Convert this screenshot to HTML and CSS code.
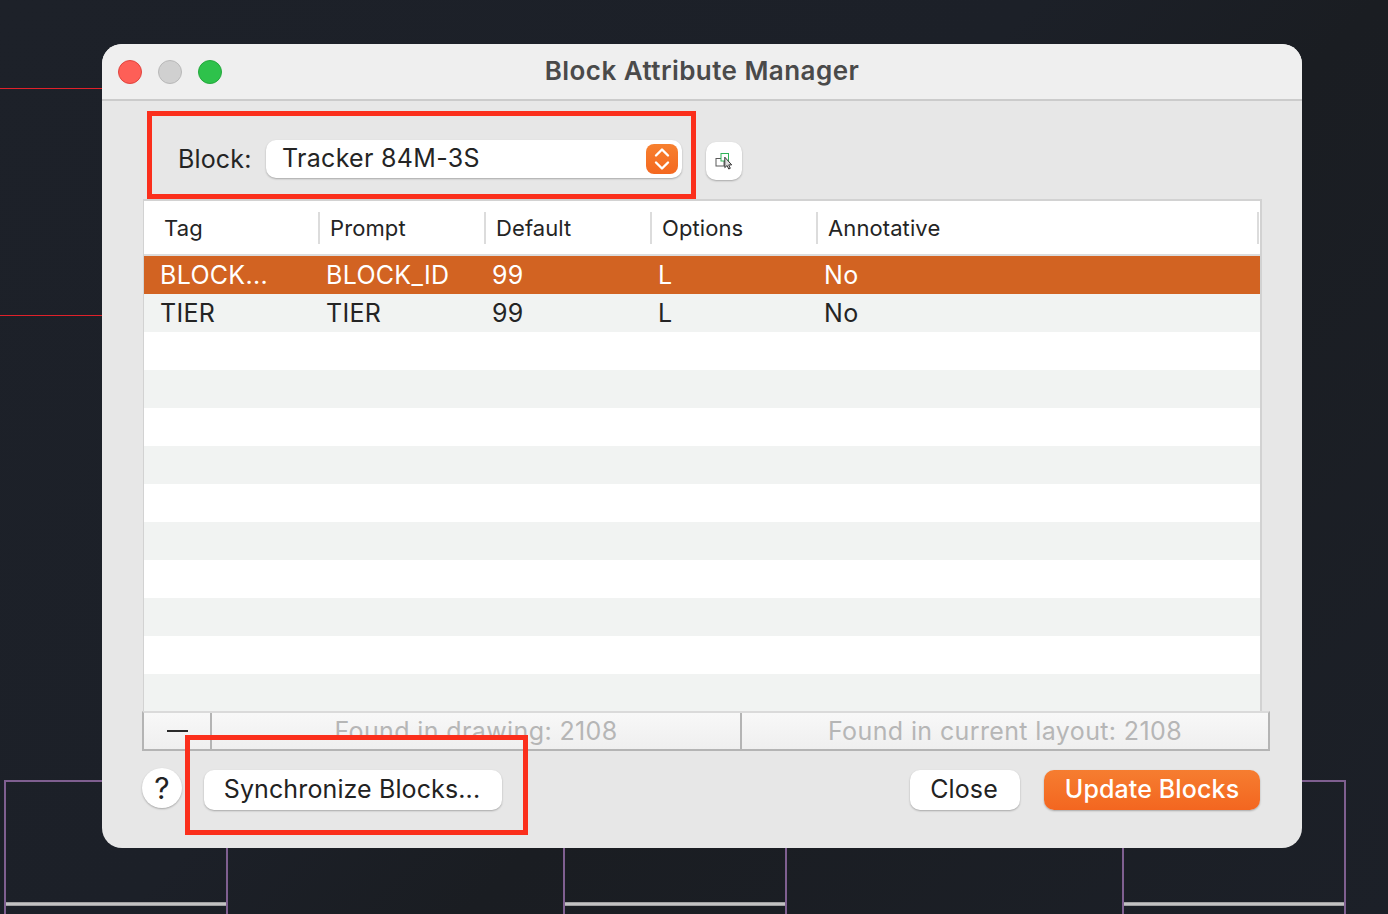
FILE: index.html
```html
<!DOCTYPE html>
<html lang="en">
<head>
<meta charset="utf-8">
<title>Block Attribute Manager</title>
<link rel="stylesheet" href="styles.css">
</head>
<body>
<div class="canvas">
  <div class="red-line red-a"></div>
  <div class="red-line red-b"></div>
  <div class="cad-box cad-1"></div>
  <div class="cad-box cad-2"></div>
  <div class="cad-box cad-3"></div>

  <div class="window">
    <header class="titlebar">
      <div class="lights">
        <span class="light light-red"></span>
        <span class="light light-grey"></span>
        <span class="light light-green"></span>
      </div>
      <h1 class="title">Block Attribute Manager</h1>
    </header>

    <div class="content">
      <div class="block-row">
        <span class="block-label">Block:</span>
        <div class="select">
          <span class="select-value">Tracker 84M-3S</span>
          <span class="stepper">
            <svg width="18" height="24" viewBox="0 0 18 24" fill="none" stroke="#fff" stroke-width="2.4" stroke-linecap="round" stroke-linejoin="round"><path d="M3 8.5 9 2.5 15 8.5"/><path d="M3 15.5 9 21.5 15 15.5"/></svg>
          </span>
        </div>
        <button class="icon-button" type="button" aria-label="Select block">
          <svg class="pick-icon" width="18" height="18" viewBox="0 0 18 18" fill="none"><rect x="1" y="6.5" width="8" height="7.5" stroke="#5a5a5a" stroke-width="1"/><rect x="6" y="1.5" width="7.5" height="7.5" fill="#fff" stroke="#2fb457" stroke-width="1"/><path d="M9.8 5.2v10.4l2.3-2.1 1.6 3.5 1.6-.7-1.6-3.4h3z" fill="#dedede" stroke="#333" stroke-width="1" stroke-linejoin="round"/></svg>
        </button>
      </div>

      <div class="table">
        <div class="thead">
          <div class="th">Tag</div>
          <div class="th">Prompt</div>
          <div class="th">Default</div>
          <div class="th">Options</div>
          <div class="th th-last">Annotative</div>
        </div>
        <div class="row row-selected">
          <div class="td">BLOCK...</div><div class="td">BLOCK_ID</div><div class="td">99</div><div class="td">L</div><div class="td">No</div>
        </div>
        <div class="row row-alt">
          <div class="td">TIER</div><div class="td">TIER</div><div class="td">99</div><div class="td">L</div><div class="td">No</div>
        </div>
        <div class="row"></div>
        <div class="row row-alt"></div>
        <div class="row"></div>
        <div class="row row-alt"></div>
        <div class="row"></div>
        <div class="row row-alt"></div>
        <div class="row"></div>
        <div class="row row-alt"></div>
        <div class="row"></div>
        <div class="row row-alt"></div>
      </div>

      <div class="status">
        <div class="status-cell status-minus"><span class="minus"></span></div>
        <div class="status-cell status-drawing">Found in drawing: 2108</div>
        <div class="status-cell status-layout">Found in current layout: 2108</div>
      </div>

      <div class="footer">
        <button class="help" type="button">?</button>
        <button class="btn btn-sync" type="button">Synchronize Blocks...</button>
        <span class="spacer"></span>
        <button class="btn btn-close" type="button">Close</button>
        <button class="btn btn-primary" type="button">Update Blocks</button>
      </div>
    </div>
  </div>

  <div class="callout callout-block"></div>
  <div class="callout callout-sync"></div>
</div>
</body>
</html>
```
FILE: styles.css
```css
* { box-sizing: border-box; }
html, body { margin: 0; padding: 0; }
body {
  width: 1388px;
  height: 914px;
  overflow: hidden;
  font-family: "Inter", "Liberation Sans", sans-serif;
  color: #242424;
}
.canvas {
  position: relative;
  width: 1388px;
  height: 914px;
  overflow: hidden;
  background: linear-gradient(135deg, #1d2129 0%, #1c2028 45%, #1a1d22 60%, #1c2028 100%);
}

/* CAD drawing behind the dialog */
.red-line { position: absolute; left: 0; width: 110px; height: 1px; background: #e0212a; }
.red-a { top: 88px; }
.red-b { top: 315px; }
.cad-box {
  position: absolute;
  top: 780px;
  width: 224px;
  height: 140px;
  border: 2px solid #7f5f90;
  border-bottom: 0;
}
.cad-box::after {
  content: "";
  position: absolute;
  left: 0;
  right: 0;
  top: 120px;
  height: 4px;
  background: linear-gradient(#8e8e90, #d4d4d4 50%, #8e8e90);
}
.cad-1 { left: 4px; }
.cad-2 { left: 563px; }
.cad-3 { left: 1122px; }

/* Dialog */
.window {
  position: absolute;
  left: 102px;
  top: 44px;
  width: 1200px;
  height: 804px;
  border-radius: 20px;
  overflow: hidden;
  background: #e7e7e7;
  display: flex;
  flex-direction: column;
}
.titlebar {
  position: relative;
  height: 57px;
  flex: none;
  display: flex;
  align-items: center;
  justify-content: center;
  background: #efefef;
  border-bottom: 2px solid #cbcbcb;
}
.lights {
  position: absolute;
  left: 16px;
  top: 16px;
  display: flex;
  gap: 16px;
}
.light { width: 24px; height: 24px; border-radius: 50%; border: 1px solid; }
.light-red { background: #fe5f57; border-color: #e0443e; }
.light-grey { background: #d0d0d0; border-color: #b8b8b8; }
.light-green { background: #2ec24b; border-color: #24a83c; }
.title {
  margin: 0 0 3px;
  font-size: 26px;
  font-weight: 600;
  letter-spacing: 0.45px;
  color: #4a4a4a;
}

.content { flex: 1; display: flex; flex-direction: column; padding: 0 32px 0 40px; }

.block-row { height: 98px; flex: none; display: flex; align-items: flex-start; }
.block-label { width: 88px; margin: 43px 0 0 36px; font-size: 25px; line-height: 30px; letter-spacing: 0.15px; flex: none; }
.select {
  width: 416px;
  height: 38px;
  margin-top: 39px;
  flex: none;
  display: flex;
  align-items: center;
  justify-content: space-between;
  padding: 0 4px 0 16px;
  border-radius: 10px;
  background: #fff;
  box-shadow: 0 1px 2px rgba(0,0,0,.28);
}
.select-value { font-size: 25px; letter-spacing: 0.3px; padding-bottom: 2px; }
.stepper {
  width: 32px;
  height: 30px;
  border-radius: 8px;
  background: linear-gradient(#f7802f, #f46820);
  display: flex;
  align-items: center;
  justify-content: center;
}
.icon-button {
  width: 36px;
  height: 38px;
  margin: 41px 0 0 24px;
  padding: 0;
  border: 0;
  border-radius: 10px;
  background: #fff;
  box-shadow: 0 1px 2px rgba(0,0,0,.28);
  display: flex;
  align-items: center;
  justify-content: center;
}
.pick-icon { overflow: visible; }

/* Table */
.table {
  width: 1119px;
  margin-left: 1px;
  height: 512px;
  flex: none;
  background: #fff;
  border: 2px solid #d2d2d2;
  border-bottom: 0;
  border-left-width: 1px;
  overflow: hidden;
}
.thead {
  height: 55px;
  display: grid;
  grid-template-columns: 176px repeat(3, 166px) 1fr;
  align-items: center;
  border-bottom: 2px solid #dcdcdc;
}
.th {
  height: 32px;
  line-height: 32px;
  padding-left: 20px;
  font-size: 22px;
  letter-spacing: 0.1px;
  border-right: 2px solid #dcdcdc;
}
.th + .th { padding-left: 10px; }
.th-last { margin-right: 1px; }
.row {
  height: 38px;
  display: grid;
  grid-template-columns: repeat(4, 166px) 1fr;
  align-items: center;
  background: #fff;
}
.row-alt { background: #f1f3f2; }
.row-selected { background: #d26322; color: #fff; }
.td { padding-left: 16px; font-size: 25px; white-space: nowrap; letter-spacing: 0.3px; }

/* Status strip */
.status {
  width: 1128px;
  height: 40px;
  flex: none;
  display: flex;
  border: 2px solid #b4b4b4;
  border-top: 2px solid #dadada;
  background: linear-gradient(#f8f8f8, #efefef);
  font-size: 25px;
  letter-spacing: 0.38px;
  color: #b6b6b6;
}
.status-cell { display: flex; align-items: center; justify-content: center; border-right: 2px solid #b4b4b4; padding-bottom: 1px; white-space: nowrap; }
.status-minus { width: 68px; flex: none; }
.minus { width: 21px; height: 2px; margin-top: 1px; background: #2a2a2a; }
.status-drawing { width: 530px; flex: none; }
.status-layout { flex: 1; border-right: 0; }

/* Footer */
.footer { display: flex; align-items: flex-start; margin-top: 17px; width: 1118px; }
.help {
  width: 40px;
  height: 40px;
  padding: 0;
  border: 0;
  border-radius: 50%;
  background: #fff;
  box-shadow: 0 1px 2px rgba(0,0,0,.28);
  font: 400 30px "Inter", sans-serif;
  color: #222;
  margin-right: 22px;
}
.btn {
  height: 40px;
  margin-top: 2px;
  padding: 0 0 2px;
  border: 0;
  border-radius: 10px;
  background: #fff;
  box-shadow: 0 1px 2px rgba(0,0,0,.28);
  font: 400 25px "Inter", sans-serif;
  letter-spacing: 0.12px;
  color: #222;
}
.btn-sync { width: 298px; padding-right: 2px; }
.spacer { flex: 1; }
.btn-close { width: 110px; margin-right: 24px; padding-right: 2px; }
.btn-primary { width: 216px; background: linear-gradient(#f67d30, #f36620); color: #fff; font-weight: 500; }

/* Annotation rectangles */
.callout { position: absolute; border: 5px solid #fb2f1c; pointer-events: none; }
.callout-block { left: 147px; top: 111px; width: 549px; height: 88px; }
.callout-sync { left: 185px; top: 735px; width: 343px; height: 100px; }
```
